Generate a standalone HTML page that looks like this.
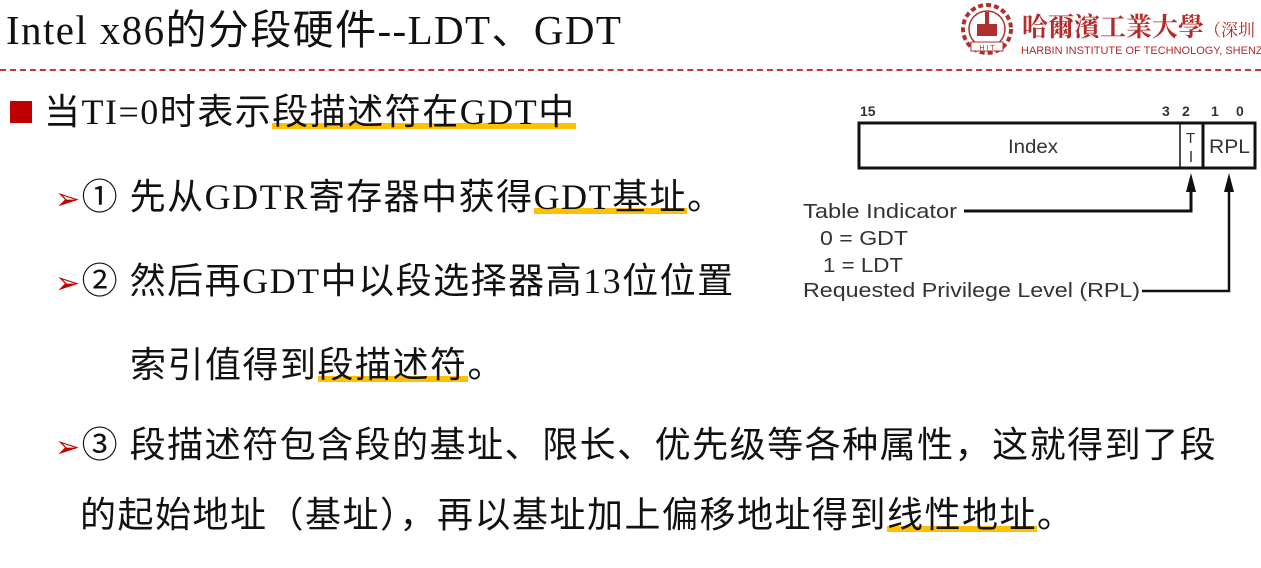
<!DOCTYPE html>
<html><head><meta charset="utf-8"><style>
body{margin:0;width:1261px;height:568px;background:#fff;position:relative;overflow:hidden;font-family:"Liberation Serif","Noto Sans CJK SC",serif;color:#111}
.a{position:absolute;white-space:nowrap}
.t{font-size:36px;line-height:40px;letter-spacing:1.5px}
.u{background:linear-gradient(transparent 78%,#ffc000 78%,#ffc000 92%,transparent 92%)}
.ar{color:#c00000;font-size:30px}
</style></head><body>
<div class="a" style="left:6px;top:7px;font-size:41px;line-height:46px;letter-spacing:1.4px">Intel x86的分段硬件--LDT、GDT</div>
<div class="a" style="left:0;top:69px;width:1261px;border-top:2px dashed #c0392b"></div>
<svg class="a" style="left:953px;top:2px" width="68" height="54" viewBox="0 0 68 54"><circle cx="34" cy="27" r="24" fill="none" stroke="#b03030" stroke-width="4" stroke-dasharray="5 3"/><circle cx="34" cy="27" r="18" fill="none" stroke="#b03030" stroke-width="1.5"/><rect x="24" y="22" width="20" height="12" fill="#b03030"/><rect x="32" y="10" width="4" height="12" fill="#b03030"/><rect x="18" y="40" width="32" height="9" fill="#fff" stroke="#b03030"/><text x="34" y="48" font-size="7" text-anchor="middle" fill="#b03030" font-family="Liberation Sans">H I T</text></svg>
<div class="a" style="left:1022px;top:10px;font-size:26px;line-height:32px;color:#b52a2a;font-family:'Noto Serif CJK SC',serif;font-weight:bold">哈爾濱工業大學<span style="font-size:17px;font-weight:normal">（深圳</span></div>
<div class="a" style="left:1021px;top:45px;font-size:11px;color:#b52a2a;font-family:'Liberation Sans',sans-serif">HARBIN INSTITUTE OF TECHNOLOGY, SHENZHEN</div>

<div class="a" style="left:10px;top:101px;width:22px;height:22px;background:#c00000"></div>
<div class="a t" style="left:44px;top:92px">当TI=0时表示<span class="u">段描述符在GDT中</span></div>
<div class="a t" style="left:55px;top:177px"><span class="ar">➢</span>① 先从GDTR寄存器中获得<span class="u">GDT基址</span>。</div>
<div class="a t" style="left:55px;top:261px"><span class="ar">➢</span>② 然后再GDT中以段选择器高13位位置</div>
<div class="a t" style="left:130px;top:345px">索引值得到<span class="u">段描述符</span>。</div>
<div class="a t" style="left:55px;top:425px"><span class="ar">➢</span>③ 段描述符包含段的基址、限长、优先级等各种属性，这就得到了段</div>
<div class="a t" style="left:80px;top:495px">的起始地址（基址），再以基址加上偏移地址得到<span class="u">线性地址</span>。</div>

<svg class="a" style="left:790px;top:95px" width="471" height="215" viewBox="0 0 471 215">
<g font-family="Liberation Sans" fill="#333">
<text x="70" y="21" font-size="14" font-weight="bold">15</text>
<text x="372" y="21" font-size="14" font-weight="bold">3</text>
<text x="392" y="21" font-size="14" font-weight="bold">2</text>
<text x="421" y="21" font-size="14" font-weight="bold">1</text>
<text x="446" y="21" font-size="14" font-weight="bold">0</text>
</g>
<rect x="69" y="28" width="396" height="45" fill="#fff" stroke="#111" stroke-width="3"/>
<line x1="390" y1="28" x2="390" y2="73" stroke="#111" stroke-width="1.5"/>
<line x1="413" y1="28" x2="413" y2="73" stroke="#111" stroke-width="3"/>
<g font-family="Liberation Sans" fill="#333" font-size="19">
<text x="218" y="58" textLength="50" lengthAdjust="spacingAndGlyphs">Index</text>
<text x="419" y="58" textLength="41" lengthAdjust="spacingAndGlyphs">RPL</text>
<text x="396" y="48" font-size="15">T</text>
</g>
<line x1="401" y1="56" x2="401" y2="67" stroke="#333" stroke-width="1.5"/>
<path d="M401 78 L396 97 L406 97 Z M439 78 L434 97 L444 97 Z" fill="#111"/>
<polyline points="174,116 401,116 401,92" fill="none" stroke="#111" stroke-width="3"/>
<polyline points="352,196 439,196 439,92" fill="none" stroke="#111" stroke-width="2.5"/>
<g font-family="Liberation Sans" fill="#333" font-size="20">
<text x="13" y="123" textLength="154" lengthAdjust="spacingAndGlyphs">Table Indicator</text>
<text x="30" y="150" textLength="88" lengthAdjust="spacingAndGlyphs">0 = GDT</text>
<text x="33" y="177" textLength="80" lengthAdjust="spacingAndGlyphs">1 = LDT</text>
<text x="13" y="202" textLength="337" lengthAdjust="spacingAndGlyphs">Requested Privilege Level (RPL)</text>
</g>
</svg>
</body></html>
